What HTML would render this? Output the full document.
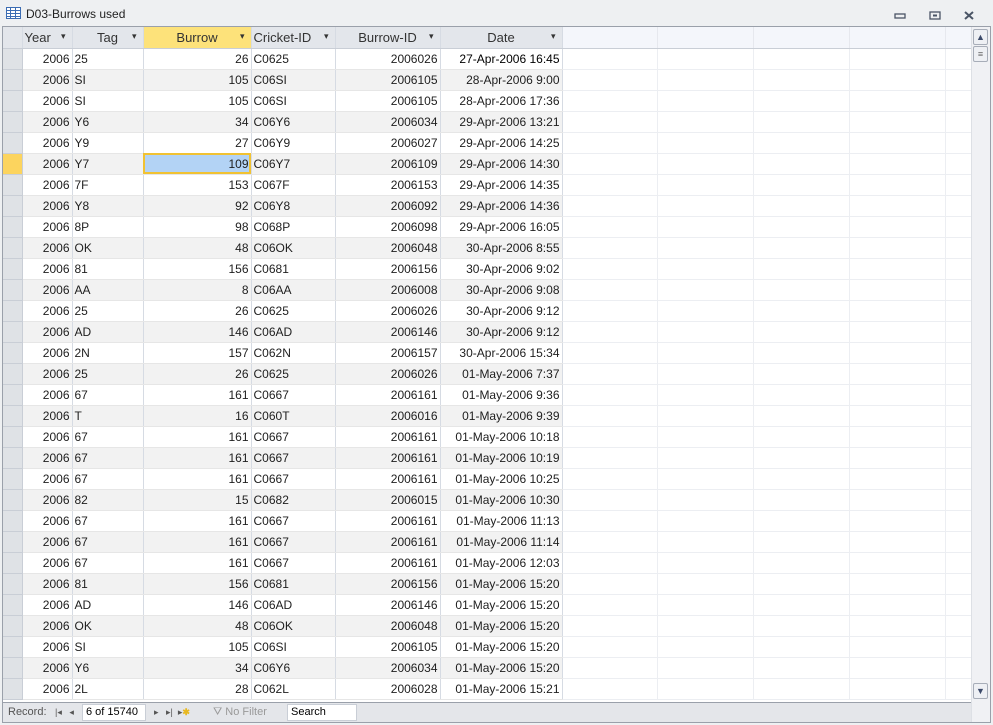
<!DOCTYPE html>
<html><head><meta charset="utf-8"><style>
*{margin:0;padding:0;box-sizing:border-box}
body{width:993px;height:725px;background:#eef0f2;font-family:"Liberation Sans",sans-serif;font-size:12px;color:#1e1e1e;position:relative;overflow:hidden}
.title{position:absolute;left:0;top:0;width:993px;height:27px;background:#eef0f2}
.title span{position:absolute;left:26px;top:7px;font-size:12px;color:#222}
.frame{position:absolute;left:2px;top:26px;width:989px;height:697px;border:1px solid #9aa0aa;background:#fff}
table{position:absolute;left:3px;top:27px;border-collapse:collapse;table-layout:fixed}
td,th{height:21px;padding:0 2px;white-space:nowrap;overflow:hidden;border-right:1px solid #d6dbe3;border-bottom:1px solid #e6e6e6;font-weight:normal}
th{background:#e3e6eb;color:#333;text-align:center;border-bottom:1px solid #c9ced6;position:relative;font-size:13px}
th.e{background:#f4f6fb;border-right:1px solid #e6e8ee}
th.sel{background:#fde27a}
th .a{position:absolute;right:6px;top:4px;font-size:9px;color:#333}
td.s{background:#dfe2e6;border-right:1px solid #c9ced6;border-bottom:1px solid #c9ced6}
td.r{text-align:right}
td.e{border-right:1px solid #eceef2;border-bottom:1px solid #eceef2;background:#fff!important}
tr.alt td{background:#f2f2f2}
tr.alt td.s{background:#dfe2e6}
tr.cur td.s{background:#fcd45e}
td.cell{background:#b3d3f5!important;outline:2px solid #f1c232;outline-offset:-2px}
.vs{position:absolute;left:971px;top:27px;width:19px;height:695px;background:#f0f1f4;border-left:1px solid #dde0e5}
.btn{position:absolute;left:1px;width:15px;height:16px;border:1px solid #a7adb8;background:#eef0f4;border-radius:2px}
.nav{position:absolute;left:3px;top:702px;width:968px;height:20px;background:#e4e6ea;border-top:1px solid #9aa0aa;font-size:11px;color:#555}
.nav span{position:absolute;top:3px}
.box{position:absolute;top:1px;height:17px;background:#fff;border:1px solid #c9ced6;color:#000;padding:1px 3px}
</style></head><body>
<div class="title"><svg style="position:absolute;left:6px;top:7px" width="15" height="12"><rect x="0.5" y="0.5" width="14" height="11" fill="#fff" stroke="#3b6cb3"/><path d="M0.5 3.5H14.5M0.5 6.5H14.5M0.5 9.5H14.5M4.5 0.5V11.5M9.5 0.5V11.5" stroke="#3b6cb3"/></svg><span>D03-Burrows used</span>
<svg style="position:absolute;left:894px;top:11px" width="80" height="10"><rect x="1" y="3" width="10" height="4" fill="none" stroke="#4a5566" stroke-width="1.3"/><rect x="36" y="1" width="10" height="7" fill="none" stroke="#4a5566" stroke-width="1.3"/><rect x="39" y="3.5" width="4" height="2" fill="#4a5566"/><path d="M71 1l8 7M79 1l-8 7" stroke="#4a5566" stroke-width="2"/></svg></div>
<div class="frame"></div>
<table>
<colgroup><col style="width:19px"><col style="width:50px"><col style="width:71px"><col style="width:108px"><col style="width:84px"><col style="width:105px"><col style="width:122px"><col style="width:95px"><col style="width:96px"><col style="width:96px"><col style="width:96px"><col style="width:26px"></colgroup>
<tr><th style="background:#e3e6eb"></th><th style="text-align:left">Year<span class="a">▾</span></th><th>Tag<span class="a">▾</span></th><th class="sel">Burrow<span class="a">▾</span></th><th style="text-align:left">Cricket-ID<span class="a">▾</span></th><th>Burrow-ID<span class="a">▾</span></th><th>Date<span class="a">▾</span></th><th class="e"></th><th class="e"></th><th class="e"></th><th class="e"></th><th class="e"></th></tr>
<tr><td class="s"></td><td class="r">2006</td><td>25</td><td class="r">26</td><td>C0625</td><td class="r">2006026</td><td class="r" style="color:#000">27-Apr-2006 16:45</td><td class="e"></td><td class="e"></td><td class="e"></td><td class="e"></td><td class="e"></td></tr>
<tr class="alt"><td class="s"></td><td class="r">2006</td><td>SI</td><td class="r">105</td><td>C06SI</td><td class="r">2006105</td><td class="r">28-Apr-2006 9:00</td><td class="e"></td><td class="e"></td><td class="e"></td><td class="e"></td><td class="e"></td></tr>
<tr><td class="s"></td><td class="r">2006</td><td>SI</td><td class="r">105</td><td>C06SI</td><td class="r">2006105</td><td class="r">28-Apr-2006 17:36</td><td class="e"></td><td class="e"></td><td class="e"></td><td class="e"></td><td class="e"></td></tr>
<tr class="alt"><td class="s"></td><td class="r">2006</td><td>Y6</td><td class="r">34</td><td>C06Y6</td><td class="r">2006034</td><td class="r">29-Apr-2006 13:21</td><td class="e"></td><td class="e"></td><td class="e"></td><td class="e"></td><td class="e"></td></tr>
<tr><td class="s"></td><td class="r">2006</td><td>Y9</td><td class="r">27</td><td>C06Y9</td><td class="r">2006027</td><td class="r">29-Apr-2006 14:25</td><td class="e"></td><td class="e"></td><td class="e"></td><td class="e"></td><td class="e"></td></tr>
<tr class="alt cur"><td class="s"></td><td class="r">2006</td><td>Y7</td><td class="r cell">109</td><td>C06Y7</td><td class="r">2006109</td><td class="r">29-Apr-2006 14:30</td><td class="e"></td><td class="e"></td><td class="e"></td><td class="e"></td><td class="e"></td></tr>
<tr><td class="s"></td><td class="r">2006</td><td>7F</td><td class="r">153</td><td>C067F</td><td class="r">2006153</td><td class="r">29-Apr-2006 14:35</td><td class="e"></td><td class="e"></td><td class="e"></td><td class="e"></td><td class="e"></td></tr>
<tr class="alt"><td class="s"></td><td class="r">2006</td><td>Y8</td><td class="r">92</td><td>C06Y8</td><td class="r">2006092</td><td class="r">29-Apr-2006 14:36</td><td class="e"></td><td class="e"></td><td class="e"></td><td class="e"></td><td class="e"></td></tr>
<tr><td class="s"></td><td class="r">2006</td><td>8P</td><td class="r">98</td><td>C068P</td><td class="r">2006098</td><td class="r">29-Apr-2006 16:05</td><td class="e"></td><td class="e"></td><td class="e"></td><td class="e"></td><td class="e"></td></tr>
<tr class="alt"><td class="s"></td><td class="r">2006</td><td>OK</td><td class="r">48</td><td>C06OK</td><td class="r">2006048</td><td class="r">30-Apr-2006 8:55</td><td class="e"></td><td class="e"></td><td class="e"></td><td class="e"></td><td class="e"></td></tr>
<tr><td class="s"></td><td class="r">2006</td><td>81</td><td class="r">156</td><td>C0681</td><td class="r">2006156</td><td class="r">30-Apr-2006 9:02</td><td class="e"></td><td class="e"></td><td class="e"></td><td class="e"></td><td class="e"></td></tr>
<tr class="alt"><td class="s"></td><td class="r">2006</td><td>AA</td><td class="r">8</td><td>C06AA</td><td class="r">2006008</td><td class="r">30-Apr-2006 9:08</td><td class="e"></td><td class="e"></td><td class="e"></td><td class="e"></td><td class="e"></td></tr>
<tr><td class="s"></td><td class="r">2006</td><td>25</td><td class="r">26</td><td>C0625</td><td class="r">2006026</td><td class="r">30-Apr-2006 9:12</td><td class="e"></td><td class="e"></td><td class="e"></td><td class="e"></td><td class="e"></td></tr>
<tr class="alt"><td class="s"></td><td class="r">2006</td><td>AD</td><td class="r">146</td><td>C06AD</td><td class="r">2006146</td><td class="r">30-Apr-2006 9:12</td><td class="e"></td><td class="e"></td><td class="e"></td><td class="e"></td><td class="e"></td></tr>
<tr><td class="s"></td><td class="r">2006</td><td>2N</td><td class="r">157</td><td>C062N</td><td class="r">2006157</td><td class="r">30-Apr-2006 15:34</td><td class="e"></td><td class="e"></td><td class="e"></td><td class="e"></td><td class="e"></td></tr>
<tr class="alt"><td class="s"></td><td class="r">2006</td><td>25</td><td class="r">26</td><td>C0625</td><td class="r">2006026</td><td class="r">01-May-2006 7:37</td><td class="e"></td><td class="e"></td><td class="e"></td><td class="e"></td><td class="e"></td></tr>
<tr><td class="s"></td><td class="r">2006</td><td>67</td><td class="r">161</td><td>C0667</td><td class="r">2006161</td><td class="r">01-May-2006 9:36</td><td class="e"></td><td class="e"></td><td class="e"></td><td class="e"></td><td class="e"></td></tr>
<tr class="alt"><td class="s"></td><td class="r">2006</td><td>T</td><td class="r">16</td><td>C060T</td><td class="r">2006016</td><td class="r">01-May-2006 9:39</td><td class="e"></td><td class="e"></td><td class="e"></td><td class="e"></td><td class="e"></td></tr>
<tr><td class="s"></td><td class="r">2006</td><td>67</td><td class="r">161</td><td>C0667</td><td class="r">2006161</td><td class="r">01-May-2006 10:18</td><td class="e"></td><td class="e"></td><td class="e"></td><td class="e"></td><td class="e"></td></tr>
<tr class="alt"><td class="s"></td><td class="r">2006</td><td>67</td><td class="r">161</td><td>C0667</td><td class="r">2006161</td><td class="r">01-May-2006 10:19</td><td class="e"></td><td class="e"></td><td class="e"></td><td class="e"></td><td class="e"></td></tr>
<tr><td class="s"></td><td class="r">2006</td><td>67</td><td class="r">161</td><td>C0667</td><td class="r">2006161</td><td class="r">01-May-2006 10:25</td><td class="e"></td><td class="e"></td><td class="e"></td><td class="e"></td><td class="e"></td></tr>
<tr class="alt"><td class="s"></td><td class="r">2006</td><td>82</td><td class="r">15</td><td>C0682</td><td class="r">2006015</td><td class="r">01-May-2006 10:30</td><td class="e"></td><td class="e"></td><td class="e"></td><td class="e"></td><td class="e"></td></tr>
<tr><td class="s"></td><td class="r">2006</td><td>67</td><td class="r">161</td><td>C0667</td><td class="r">2006161</td><td class="r">01-May-2006 11:13</td><td class="e"></td><td class="e"></td><td class="e"></td><td class="e"></td><td class="e"></td></tr>
<tr class="alt"><td class="s"></td><td class="r">2006</td><td>67</td><td class="r">161</td><td>C0667</td><td class="r">2006161</td><td class="r">01-May-2006 11:14</td><td class="e"></td><td class="e"></td><td class="e"></td><td class="e"></td><td class="e"></td></tr>
<tr><td class="s"></td><td class="r">2006</td><td>67</td><td class="r">161</td><td>C0667</td><td class="r">2006161</td><td class="r">01-May-2006 12:03</td><td class="e"></td><td class="e"></td><td class="e"></td><td class="e"></td><td class="e"></td></tr>
<tr class="alt"><td class="s"></td><td class="r">2006</td><td>81</td><td class="r">156</td><td>C0681</td><td class="r">2006156</td><td class="r">01-May-2006 15:20</td><td class="e"></td><td class="e"></td><td class="e"></td><td class="e"></td><td class="e"></td></tr>
<tr><td class="s"></td><td class="r">2006</td><td>AD</td><td class="r">146</td><td>C06AD</td><td class="r">2006146</td><td class="r">01-May-2006 15:20</td><td class="e"></td><td class="e"></td><td class="e"></td><td class="e"></td><td class="e"></td></tr>
<tr class="alt"><td class="s"></td><td class="r">2006</td><td>OK</td><td class="r">48</td><td>C06OK</td><td class="r">2006048</td><td class="r">01-May-2006 15:20</td><td class="e"></td><td class="e"></td><td class="e"></td><td class="e"></td><td class="e"></td></tr>
<tr><td class="s"></td><td class="r">2006</td><td>SI</td><td class="r">105</td><td>C06SI</td><td class="r">2006105</td><td class="r">01-May-2006 15:20</td><td class="e"></td><td class="e"></td><td class="e"></td><td class="e"></td><td class="e"></td></tr>
<tr class="alt"><td class="s"></td><td class="r">2006</td><td>Y6</td><td class="r">34</td><td>C06Y6</td><td class="r">2006034</td><td class="r">01-May-2006 15:20</td><td class="e"></td><td class="e"></td><td class="e"></td><td class="e"></td><td class="e"></td></tr>
<tr><td class="s"></td><td class="r">2006</td><td>2L</td><td class="r">28</td><td>C062L</td><td class="r">2006028</td><td class="r">01-May-2006 15:21</td><td class="e"></td><td class="e"></td><td class="e"></td><td class="e"></td><td class="e"></td></tr>
</table>
<div class="vs"><div class="btn" style="top:2px;font-size:9px;text-align:center;color:#3c4a6a;line-height:14px">▲</div><div class="btn" style="top:19px;font-size:9px;text-align:center;color:#666;line-height:14px">≡</div><div class="btn" style="top:656px;font-size:9px;text-align:center;color:#3c4a6a;line-height:14px">▼</div></div>
<div style="position:absolute;left:3px;top:700px;width:968px;height:2px;background:#fff"></div>
<div class="nav"><span style="left:5px">Record:</span><span style="left:52px;font-size:9px;top:4px">|◂ &nbsp; ◂</span><div class="box" style="left:79px;width:64px">6 of 15740</div><span style="left:151px;font-size:9px;top:4px">▸ &nbsp; ▸| &nbsp;▸<b style="color:#e8b820">✱</b></span><span style="left:210px;color:#999">⛛ No Filter</span><div class="box" style="left:284px;width:70px">Search</div></div>
</body></html>
